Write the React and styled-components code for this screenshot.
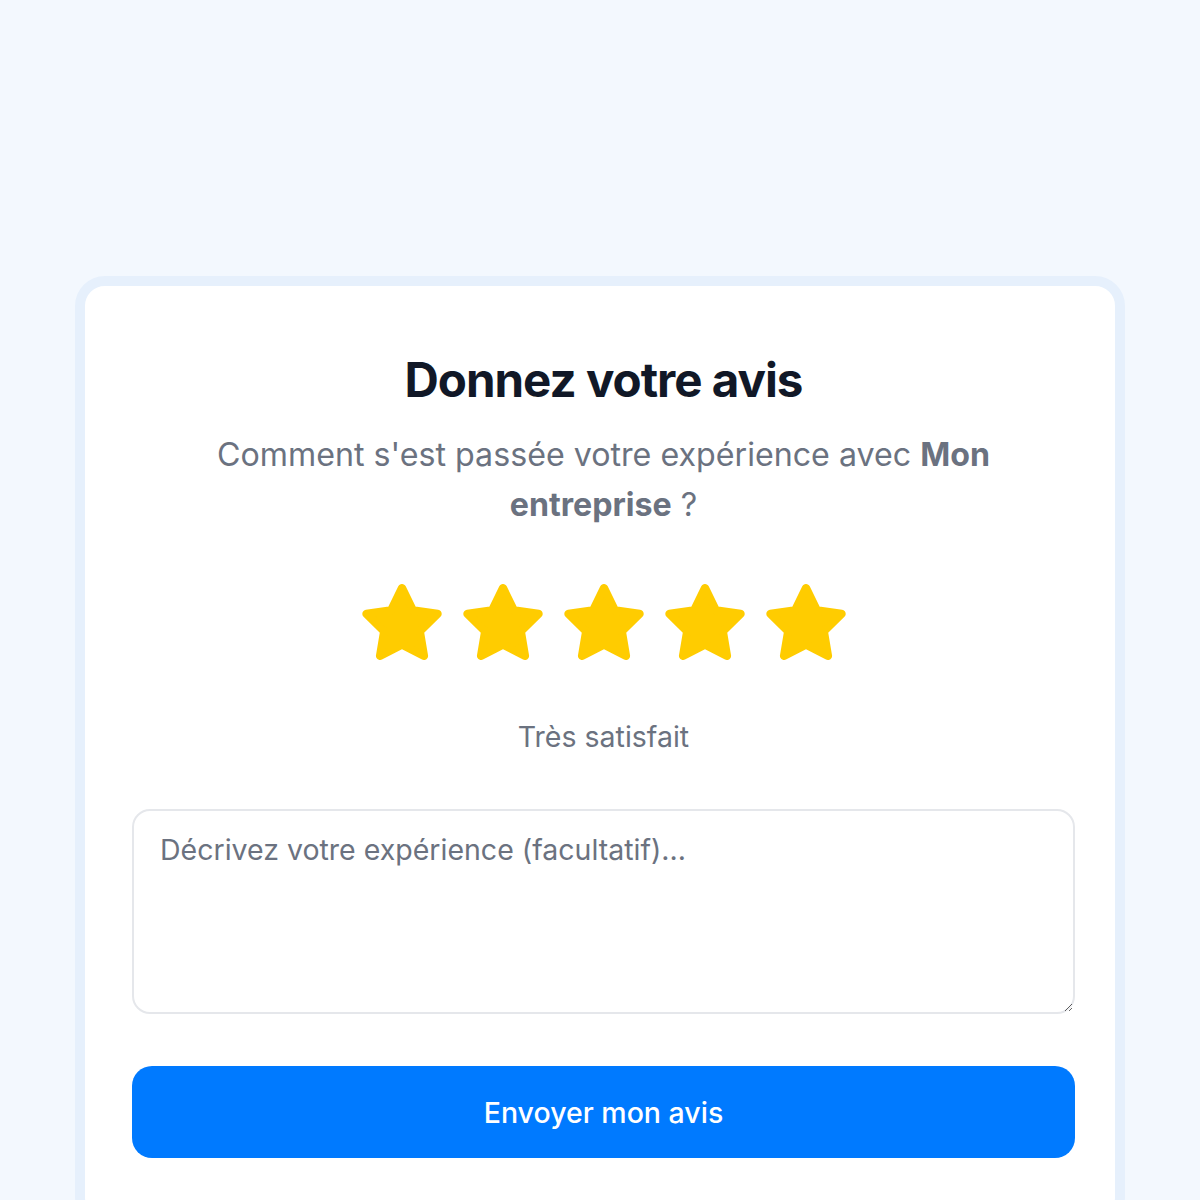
import React, { useState } from 'react';
import styled, { createGlobalStyle } from 'styled-components';

const GlobalStyle = createGlobalStyle`
  html, body {
    margin: 0;
    padding: 0;
    background: #f3f8fe;
    font-family: Inter, "Noto Sans", sans-serif;
  }
`;

const Page = styled.div`
  min-height: 1200px;
  padding-top: 276px;
  display: flex;
  justify-content: center;
  box-sizing: border-box;
`;

const Card = styled.div`
  width: 943px;
  background: #ffffff;
  border: 10px solid #e6f0fc;
  border-radius: 30px;
  padding: 66px 40px 60px 47px;
  display: flex;
  flex-direction: column;
  align-items: center;
`;

const Title = styled.h1`
  margin: 0;
  font-size: 47.5px;
  line-height: 56px;
  font-weight: 700;
  letter-spacing: -1px;
  color: #111827;
`;

const Subtitle = styled.p`
  margin: 22px 0 0;
  font-size: 32.2px;
  line-height: 50px;
  color: #6b7280;
  text-align: center;
  max-width: 820px;

  strong {
    font-weight: 700;
  }
`;

const Stars = styled.div`
  display: flex;
  gap: 21px;
  margin-top: 54px;
`;

const StarButton = styled.button`
  border: none;
  background: none;
  padding: 0;
  width: 80px;
  height: 76px;
  cursor: pointer;
  display: flex;
`;

const Label = styled.div`
  margin-top: 60px;
  font-size: 28.5px;
  line-height: 34px;
  color: #6b7280;
`;

const TextArea = styled.textarea`
  margin-top: 55px;
  width: 100%;
  height: 205px;
  box-sizing: border-box;
  border: 2px solid #e5e7eb;
  border-radius: 18px;
  padding: 21px 26px;
  font-family: Inter, "Noto Sans", sans-serif;
  font-size: 28.5px;
  color: #111827;
  resize: vertical;
  outline: none;

  &::placeholder {
    color: #6b7280;
  }
`;

const SubmitButton = styled.button`
  margin-top: 52px;
  width: 100%;
  height: 92px;
  border: none;
  border-radius: 20px;
  background: #007aff;
  color: #ffffff;
  font-family: Inter, "Noto Sans", sans-serif;
  font-size: 28.5px;
  font-weight: 500;
  cursor: pointer;
`;

const labels = ['Très insatisfait', 'Insatisfait', 'Correct', 'Satisfait', 'Très satisfait'];

const Star = ({ filled }) => (
  <svg width="80" height="76" viewBox="1.5 1.1 21 20.1">
    <path
      d="M12 2.2 L14.9 8.1 L21.4 9 L16.7 13.6 L17.8 20.1 L12 17.1 L6.2 20.1 L7.3 13.6 L2.6 9 L9.1 8.1 Z"
      fill={filled ? '#ffcc00' : '#e5e7eb'}
      stroke={filled ? '#ffcc00' : '#e5e7eb'}
      strokeWidth="2.2"
      strokeLinejoin="round"
    />
  </svg>
);

const App = () => {
  const [rating, setRating] = useState(5);
  const [comment, setComment] = useState('');

  return (
    <>
      <GlobalStyle />
      <Page>
        <Card>
          <Title>Donnez votre avis</Title>
          <Subtitle>
            Comment s'est passée votre expérience avec <strong>Mon entreprise</strong> ?
          </Subtitle>
          <Stars>
            {[1, 2, 3, 4, 5].map((n) => (
              <StarButton key={n} onClick={() => setRating(n)} aria-label={`${n} étoiles`}>
                <Star filled={n <= rating} />
              </StarButton>
            ))}
          </Stars>
          <Label>{labels[rating - 1]}</Label>
          <TextArea
            placeholder="Décrivez votre expérience (facultatif)..."
            value={comment}
            onChange={(e) => setComment(e.target.value)}
          />
          <SubmitButton>Envoyer mon avis</SubmitButton>
        </Card>
      </Page>
    </>
  );
};

export default App;
